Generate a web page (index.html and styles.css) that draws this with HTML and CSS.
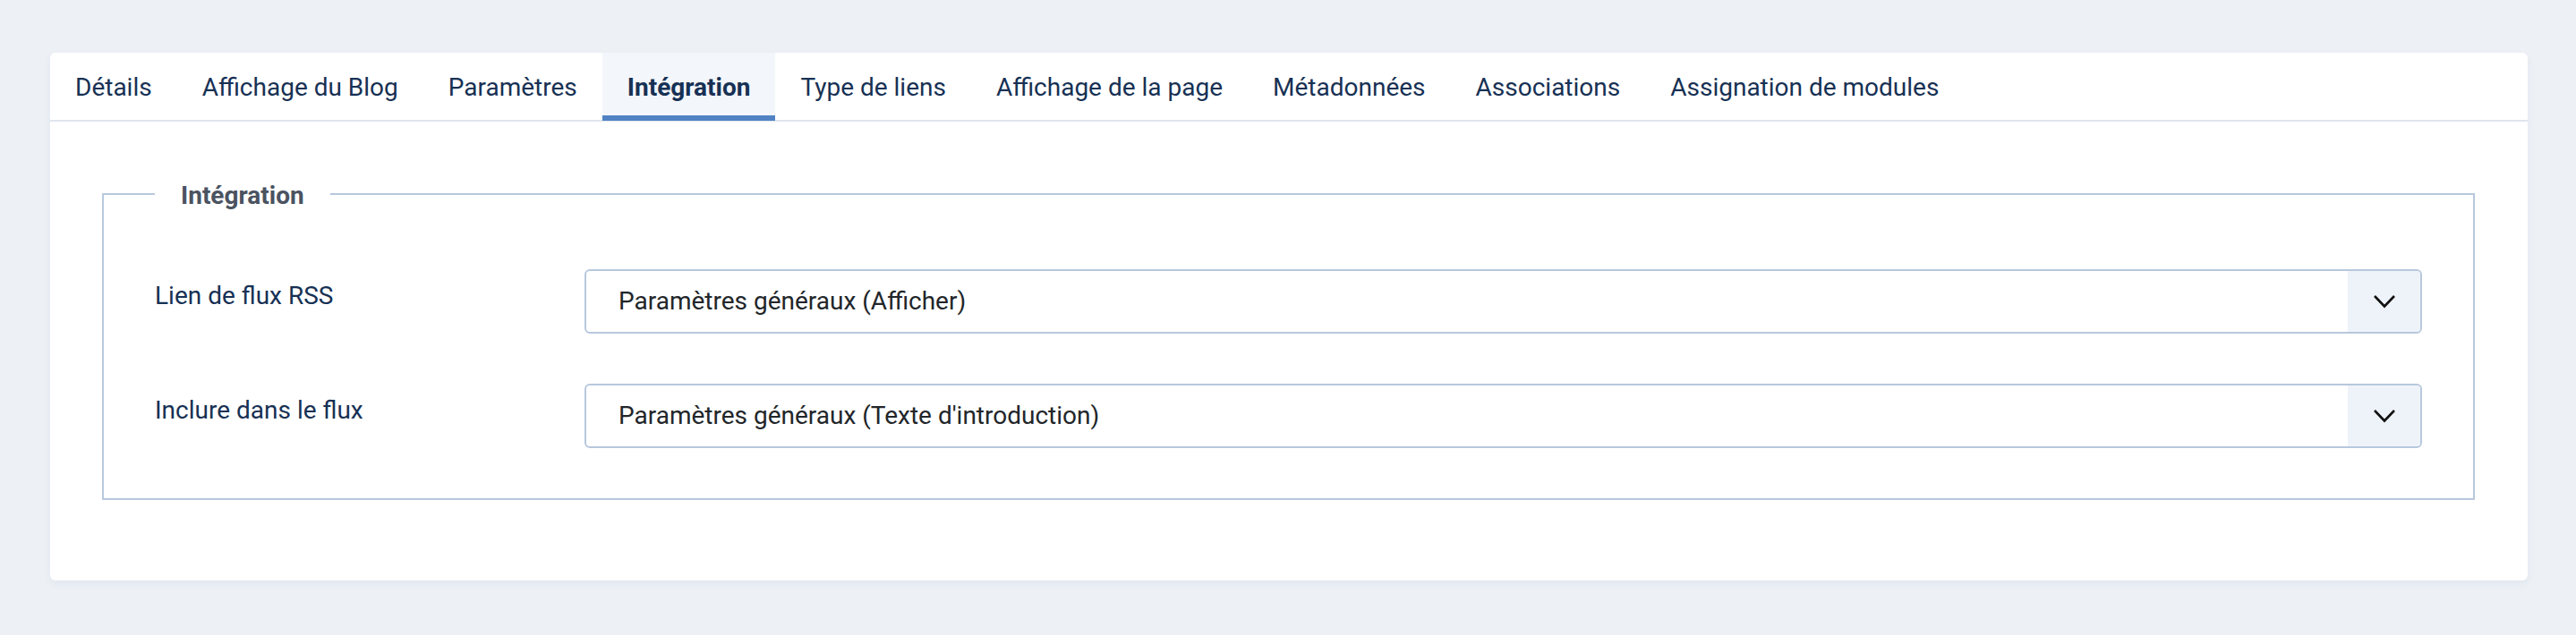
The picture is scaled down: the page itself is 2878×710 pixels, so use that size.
FILE: index.html
```html
<!DOCTYPE html>
<html lang="fr">
<head>
  <meta charset="UTF-8" />
  <meta name="viewport" content="width=device-width, initial-scale=1.0" />
  <title>Catégorie - Intégration</title>
  <link rel="stylesheet" href="styles.css">
</head>
<body>
  <div class="page">
    <div class="card">
      <div class="tab-list">
        <div class="tab">Détails</div>
        <div class="tab">Affichage du Blog</div>
        <div class="tab">Paramètres</div>
        <div class="tab tab-active">Intégration</div>
        <div class="tab">Type de liens</div>
        <div class="tab">Affichage de la page</div>
        <div class="tab">Métadonnées</div>
        <div class="tab">Associations</div>
        <div class="tab">Assignation de modules</div>
      </div>

      <div class="card-body">
        <fieldset class="options-form">
          <legend>Intégration</legend>

          <div class="control-group">
            <div class="control-label">Lien de flux RSS</div>
            <div class="select-box">
              <span class="select-value">Paramètres généraux (Afficher)</span>
              <span class="select-btn">
                <svg width="26" height="17" viewBox="0 0 26 17"><path d="M2 2 L13 13.5 L24 2" fill="none" stroke="#111" stroke-width="2.6"/></svg>
              </span>
            </div>
          </div>

          <div class="control-group">
            <div class="control-label">Inclure dans le flux</div>
            <div class="select-box">
              <span class="select-value">Paramètres généraux (Texte d'introduction)</span>
              <span class="select-btn">
                <svg width="26" height="17" viewBox="0 0 26 17"><path d="M2 2 L13 13.5 L24 2" fill="none" stroke="#111" stroke-width="2.6"/></svg>
              </span>
            </div>
          </div>
        </fieldset>
      </div>
    </div>
  </div>
</body>
</html>
```

FILE: styles.css
```css
body {
  margin: 0;
  background-color: #edf1f6;
  font-family: Roboto, "Liberation Sans", sans-serif;
  font-size: 28px;
  color: #173154;
}

.page {
  padding: 59px 54px 62px 56px;
}

.card {
  background: #ffffff;
  border-radius: 6px;
  box-shadow: 0 4px 10px rgba(40, 70, 120, 0.06);
}

/* tabs row */
.tab-list {
  display: flex;
  border-bottom: 2px solid #dfe5ee;
}

.tab {
  height: 72px;
  line-height: 72px;
  padding: 3px 28px 0 28px;
  white-space: nowrap;
}

.tab-active {
  font-weight: 700;
  background: #f3f6fa;
  box-shadow: inset 0 -6px 0 #5183c4;
  margin-bottom: -1px;
  height: 73px;
}

.card-body {
  padding: 58px 59px 90px 58px;
}

/* fieldset */
.options-form {
  margin: 0;
  border: 2px solid #b7c8dd;
  padding: 61px 57px 56px 57px;
  min-inline-size: 0;
}

.options-form legend {
  padding: 4px 29px 0 29px;
  font-weight: 700;
  color: #4b5361;
  line-height: 42px;
}

.control-group {
  display: grid;
  grid-template-columns: 480px 1fr;
  align-items: start;
}

.control-group + .control-group {
  margin-top: 56px;
}

.control-label {
  padding-top: 9px;
  line-height: 42px;
}

/* select */
.select-box {
  display: flex;
  height: 68px;
  border: 2px solid #b7c8dd;
  border-radius: 6px;
  overflow: hidden;
  color: #22262a;
}

.select-value {
  flex: 1;
  line-height: 68px;
  padding-left: 36px;
}

.select-btn {
  width: 81px;
  background: #eef3fa;
  display: flex;
  align-items: center;
  justify-content: center;
}
```
